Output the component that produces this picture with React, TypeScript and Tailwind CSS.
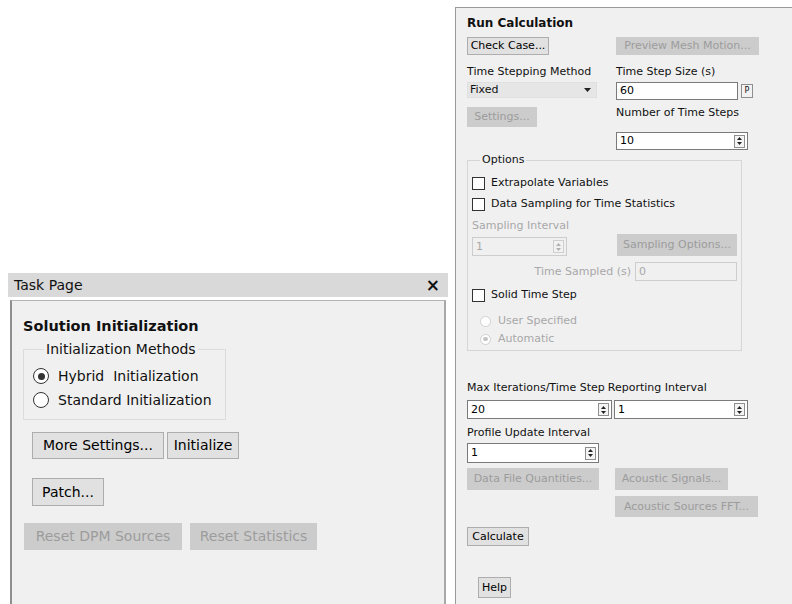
import React from 'react';

const FONT = "font-['DejaVu_Sans','Liberation_Sans',sans-serif]";

// small up/down spinner drawn at the right end of numeric fields
const Spin = ({ disabled = false }: { disabled?: boolean }) => (
  <span
    className={`flex h-[13px] w-[11px] shrink-0 flex-col items-center justify-center gap-[2px] border ${
      disabled ? 'border-[#cfcfcf] bg-[#f2f2f2]' : 'border-[#8e8e8e] bg-[#f4f4f4]'
    }`}
  >
    <svg width="5" height="3" viewBox="0 0 5 3">
      <path d="M0 3 L2.5 0 L5 3Z" fill={disabled ? '#b0b0b0' : '#222'} />
    </svg>
    <svg width="5" height="3" viewBox="0 0 5 3">
      <path d="M0 0 L2.5 3 L5 0Z" fill={disabled ? '#b0b0b0' : '#222'} />
    </svg>
  </span>
);

const NumField = ({ value, w, spin = true, disabled = false, h = 'h-[19px]' }: { value: string; w: string; spin?: boolean; disabled?: boolean; h?: string }) => (
  <div
    className={`flex ${h} ${w} items-center justify-between border pl-[3px] pr-[2px] ${
      disabled ? 'border-[#cdcdcd] bg-[#f0f0f0] text-[#a8a8a8]' : 'border-[#7a7a7a] bg-white text-black'
    }`}
  >
    <span>{value}</span>
    {spin && <Spin disabled={disabled} />}
  </div>
);

const Btn = ({ label, w, h = 'h-[18px]', disabled = false }: { label: string; w: string; h?: string; disabled?: boolean }) => (
  <button
    className={`flex ${h} ${w} items-center justify-center border ${
      disabled ? 'border-[#cccccc] bg-[#cccccc] text-[#9c9c9c]' : 'border-[#adadad] bg-[#e1e1e1] text-black'
    }`}
  >
    {label}
  </button>
);

const Check = ({ label }: { label: string }) => (
  <label className="flex h-[16px] items-center gap-[6px]">
    <span className="h-[13px] w-[13px] border border-[#333] bg-white" />
    <span>{label}</span>
  </label>
);

const Radio = ({ label, on, size, gap, disabled = false }: { label: string; on: boolean; size: string; gap: string; disabled?: boolean }) => (
  <label className={`flex items-center ${gap}`}>
    <span
      className={`flex ${size} items-center justify-center rounded-full border ${
        disabled ? 'border-[#cfcfcf] bg-white' : 'border-[#333] bg-white'
      }`}
    >
      {on && <span className={`h-[50%] w-[50%] rounded-full ${disabled ? 'bg-[#c4c4c4]' : 'bg-[#333]'}`} />}
    </span>
    <span className={`whitespace-pre ${disabled ? 'text-[#a8a8a8]' : ''}`}>{label}</span>
  </label>
);

const TaskPage = () => (
  <div className="flex w-[448px] shrink-0 flex-col pt-[273px]">
    <div className="ml-[8px] flex h-[24px] items-center justify-between bg-[#d9d9d9] pl-[6px] pr-[8px] text-[14px] text-[#111]">
      <span>Task Page</span>
      <span className="text-[17px] font-bold leading-none">×</span>
    </div>
    <div className="mt-[3px] ml-[10px] mr-[2px] flex flex-1 flex-col border-l-2 border-r-2 border-t border-l-[#8f8f8f] border-r-[#a9a9a9] border-t-[#b4b4b4] bg-[#f0f0f0] pl-[11px] text-[14px] text-[#111]">
      <div className="mt-[15px] h-[20px] text-[14.5px] font-bold leading-[20px]">Solution Initialization</div>
      <fieldset className="mt-[5px] w-[203px] border border-[#dcdcdc] pb-[10px] pl-[9px]">
        <legend className="ml-[11px] px-[2px] leading-[16px]">Initialization Methods</legend>
        <div className="mt-[10px] flex flex-col gap-[6px] leading-[18px]">
          <Radio label="Hybrid  Initialization" on size="h-[16px] w-[16px]" gap="gap-[9px]" />
          <Radio label="Standard Initialization" on={false} size="h-[16px] w-[16px]" gap="gap-[9px]" />
        </div>
      </fieldset>
      <div className="ml-[9px] mt-[12px] flex gap-[3px]">
        <Btn label="More Settings..." w="w-[132px]" h="h-[27px]" />
        <Btn label="Initialize" w="w-[72px]" h="h-[27px]" />
      </div>
      <div className="ml-[9px] mt-[19px] flex">
        <Btn label="Patch..." w="w-[72px]" h="h-[28px]" />
      </div>
      <div className="ml-[1px] mt-[17px] flex gap-[8px]">
        <Btn label="Reset DPM Sources" w="w-[158px]" h="h-[27px]" disabled />
        <Btn label="Reset Statistics" w="w-[127px]" h="h-[27px]" disabled />
      </div>
    </div>
  </div>
);

const RunCalculation = () => (
  <div className="ml-[7px] mt-[7px] flex flex-1 flex-col border-l border-t border-[#9a9a9a] bg-[#f0f0f0] pl-[11px] text-[11px] leading-[16px] text-[#111]">
    <div className="mt-[7px] h-[16px] text-[12px] font-bold">Run Calculation</div>

    <div className="mt-[6px] grid grid-cols-[149px_1fr]">
      <Btn label="Check Case..." w="w-[82px]" />
      <Btn label="Preview Mesh Motion..." w="w-[143px]" disabled />
    </div>

    <div className="mt-[9px] grid h-[16px] grid-cols-[149px_1fr]">
      <span>Time Stepping Method</span>
      <span>Time Step Size (s)</span>
    </div>

    <div className="mt-[2px] grid grid-cols-[149px_1fr]">
      <div className="flex h-[16px] w-[130px] items-center justify-between border border-[#e0e0e0] bg-[#e6e6e6] pl-[2px] pr-[5px]">
        <span>Fixed</span>
        <svg width="7" height="4" viewBox="0 0 7 4">
          <path d="M0 0 L3.5 4 L7 0Z" fill="#222" />
        </svg>
      </div>
      <div className="flex items-center gap-[3px]">
        <NumField value="60" w="w-[122px]" spin={false} h="h-[18px]" />
        <span className="flex h-[14px] w-[12px] items-center justify-center border border-[#8e8e8e] bg-[#f2f2f2] text-[8px] leading-none">P</span>
      </div>
    </div>

    <div className="grid grid-cols-[149px_1fr]">
      <div className="mt-[7px]">
        <Btn label="Settings..." w="w-[70px]" h="h-[20px]" disabled />
      </div>
      <div className="flex flex-col">
        <span className="mt-[5px] h-[16px]">Number of Time Steps</span>
        <div className="mt-[11px]">
          <NumField value="10" w="w-[132px]" h="h-[18px]" />
        </div>
      </div>
    </div>

    <fieldset className="mt-[3px] h-[198px] w-[275px] border border-[#d6d6d6] pl-[4px]">
      <legend className="ml-[8px] px-[2px] leading-[14px]">Options</legend>
      <div className="mt-[8px] flex flex-col gap-[5px]">
        <Check label="Extrapolate Variables" />
        <Check label="Data Sampling for Time Statistics" />
      </div>
      <div className="mt-[6px] h-[16px] text-[#a8a8a8]">Sampling Interval</div>
      <div className="flex items-start justify-between pr-[4px]">
        <div className="mt-[3px]">
          <NumField value="1" w="w-[95px]" disabled />
        </div>
        <Btn label="Sampling Options..." w="w-[120px]" h="h-[22px]" disabled />
      </div>
      <div className="mt-[6px] flex items-center justify-end gap-[4px] pr-[4px]">
        <span className="text-[#a8a8a8]">Time Sampled (s)</span>
        <NumField value="0" w="w-[102px]" spin={false} disabled />
      </div>
      <div className="mt-[6px]">
        <Check label="Solid Time Step" />
      </div>
      <div className="ml-[8px] mt-[10px] flex flex-col gap-[2px] leading-[16px]">
        <Radio label="User Specified" on={false} size="h-[11px] w-[11px]" gap="gap-[7px]" disabled />
        <Radio label="Automatic" on size="h-[11px] w-[11px]" gap="gap-[7px]" disabled />
      </div>
    </fieldset>

    <div className="mt-[29px] flex h-[16px] gap-[3px]">
      <span>Max Iterations/Time Step</span>
      <span>Reporting Interval</span>
    </div>
    <div className="mt-[4px] flex gap-[2px]">
      <NumField value="20" w="w-[145px]" />
      <NumField value="1" w="w-[134px]" />
    </div>
    <div className="mt-[6px] h-[16px]">Profile Update Interval</div>
    <div className="mt-[2px]">
      <NumField value="1" w="w-[132px]" h="h-[20px]" />
    </div>
    <div className="mt-[5px] grid grid-cols-[148px_1fr]">
      <Btn label="Data File Quantities..." w="w-[132px]" h="h-[22px]" disabled />
      <Btn label="Acoustic Signals..." w="w-[113px]" h="h-[22px]" disabled />
    </div>
    <div className="mt-[6px] grid grid-cols-[148px_1fr]">
      <span />
      <Btn label="Acoustic Sources FFT..." w="w-[143px]" h="h-[21px]" disabled />
    </div>
    <div className="mt-[10px]">
      <Btn label="Calculate" w="w-[62px]" h="h-[19px]" />
    </div>
    <div className="ml-[11px] mt-[31px]">
      <Btn label="Help" w="w-[33px]" h="h-[21px]" />
    </div>
  </div>
);

export default function App() {
  return (
    <div className={`flex h-[604px] w-[792px] overflow-hidden bg-white ${FONT}`}>
      <TaskPage />
      <RunCalculation />
    </div>
  );
}
